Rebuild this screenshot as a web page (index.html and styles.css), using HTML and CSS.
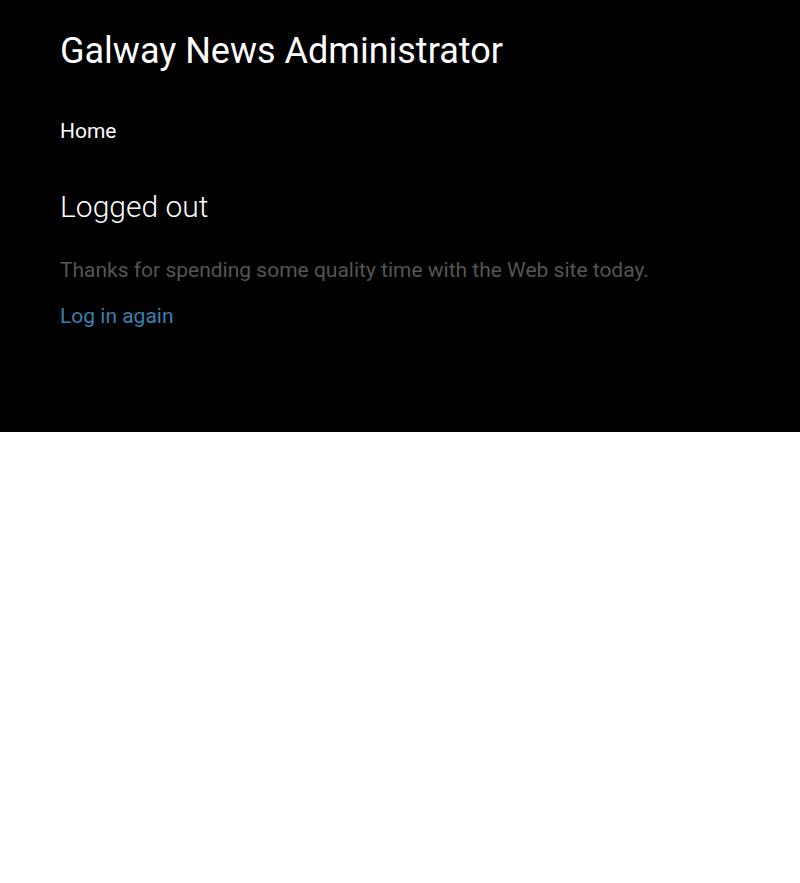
FILE: index.html
```html
<!DOCTYPE html>
<html lang="en">
<head>
<meta charset="utf-8">
<title>Logged out</title>
<link rel="stylesheet" href="styles.css">
</head>
<body>
<div class="page">
  <header class="site-header">
    <h1 class="site-title">Galway News Administrator</h1>
    <nav class="site-nav"><a class="nav-link" href="#">Home</a></nav>
  </header>
  <main class="content">
    <h2 class="page-title">Logged out</h2>
    <p class="message">Thanks for spending some quality time with the Web site today.</p>
    <p class="again"><a class="login-link" href="#">Log in again</a></p>
  </main>
</div>
</body>
</html>
```
FILE: styles.css
```css
html, body {
  margin: 0;
  padding: 0;
  background: #fff;
  font-family: Roboto, "Liberation Sans", sans-serif;
}
.page {
  background: #000;
  color: #fff;
  padding: 28px 60px 0;
  height: 432px;
  box-sizing: border-box;
}
.site-title {
  margin: 0;
  font-size: 36px;
  font-weight: 400;
  line-height: 46px;
}
.site-nav {
  margin-top: 45px;
  font-size: 21px;
  line-height: 24px;
}
.nav-link {
  color: #fff;
  text-decoration: none;
}
.content {
  margin-top: 44px;
}
.page-title {
  margin: 0;
  font-size: 30px;
  font-weight: 300;
  line-height: 40px;
}
.message {
  margin: 29px 0 0;
  font-size: 21px;
  font-weight: 400;
  line-height: 28px;
  color: #555;
}
.again {
  margin: 18px 0 0;
  font-size: 21px;
  line-height: 28px;
}
.login-link {
  color: #3a7fb0;
  text-decoration: none;
}
```
